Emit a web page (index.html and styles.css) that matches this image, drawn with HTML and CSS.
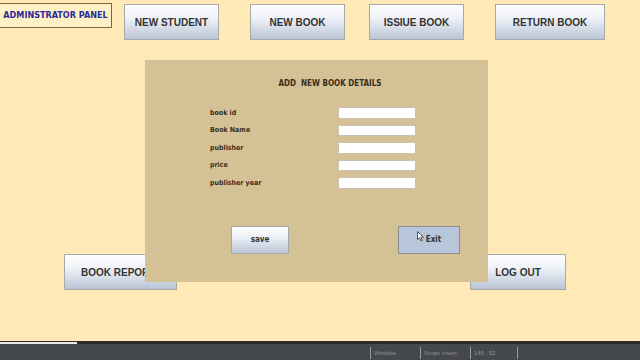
FILE: index.html
```html
<!DOCTYPE html>
<html lang="en">
<head>
    <meta charset="UTF-8">
    <meta name="viewport" content="width=device-width, initial-scale=1.0">
    <title>Administrator Panel</title>
    <link rel="stylesheet" href="styles.css">
</head>
<body>

<div class="screen">
    <!-- Top menu -->
    <div class="top-row">
        <div class="panel-title">ADMINSTRATOR PANEL</div>
        <button class="menu-btn btn-student">NEW STUDENT</button>
        <button class="menu-btn btn-book">NEW BOOK</button>
        <button class="menu-btn btn-issue">ISSIUE BOOK</button>
        <button class="menu-btn btn-return">RETURN BOOK</button>
    </div>

    <!-- Bottom menu -->
    <div class="bottom-row">
        <button class="menu-btn btn-report">BOOK REPORT</button>
        <button class="menu-btn btn-logout">LOG OUT</button>
    </div>

    <!-- Add book dialog -->
    <div class="dialog">
        <h3 class="dialog-title">ADD&nbsp; NEW BOOK DETAILS</h3>
        <form class="book-form" onsubmit="return false">
            <label for="bookId">book id</label>
            <input type="text" id="bookId">
            <label for="bookName">Book Name</label>
            <input type="text" id="bookName">
            <label for="publisher">publisher</label>
            <input type="text" id="publisher">
            <label for="price">price</label>
            <input type="text" id="price">
            <label for="pubYear">publisher year</label>
            <input type="text" id="pubYear">
        </form>
        <div class="dialog-actions">
            <button class="menu-btn btn-save">save</button>
            <button class="menu-btn btn-exit">
                <svg class="cursor" width="8" height="11" viewBox="0 0 8 11">
                    <path d="M0.5 0.5 L0.5 8.5 L2.5 6.8 L4 10 L5.3 9.4 L3.9 6.3 L6.5 6.2 Z" fill="#fff" stroke="#333" stroke-width="0.8"/>
                </svg>
                Exit
            </button>
        </div>
    </div>
</div>

<!-- Status bar -->
<div class="status-bar">
    <div class="status-left"></div>
    <div class="status-items">
        <span class="status-cell">Writable</span>
        <span class="status-cell">Smart Insert</span>
        <span class="status-cell">145 : 52</span>
        <span class="status-cell end"></span>
    </div>
</div>

</body>
</html>
```

FILE: styles.css
```css
body {
    margin: 0;
    padding: 0;
    width: 640px;
    height: 360px;
    overflow: hidden;
    background-color: #fee9b7;
    font-family: "Liberation Sans", Arial, sans-serif;
}

.screen {
    position: relative;
    height: 341px;
}

.top-row {
    display: flex;
    align-items: flex-start;
    padding-top: 3px;
}

.panel-title {
    width: 112px;
    height: 25px;
    border: 1px solid #7a6a3a;
    border-left: none;
    background-color: #fdf0c4;
    color: #2a2a9c;
    font-family: "DejaVu Sans Condensed", "DejaVu Sans", sans-serif;
    font-size: 9px;
    font-weight: bold;
    line-height: 23px;
    text-align: center;
    white-space: nowrap;
    box-sizing: border-box;
}

.menu-btn {
    height: 36px;
    border: 1px solid #a8a8a8;
    background: linear-gradient(to bottom, #fdfdfe 0%, #eef1f6 40%, #b9c5d7 100%);
    color: #333;
    font-family: "Liberation Sans", Arial, sans-serif;
    font-size: 10px;
    font-weight: bold;
    padding: 0;
    box-sizing: border-box;
}

.btn-student {
    width: 95px;
    margin: 1px 0 0 12px;
}

.btn-book {
    width: 95px;
    margin: 1px 0 0 31px;
}

.btn-issue {
    width: 95px;
    margin: 1px 0 0 24px;
}

.btn-return {
    width: 110px;
    margin: 1px 0 0 31px;
}

.bottom-row {
    display: flex;
    margin-top: 214px;
}

.btn-report {
    width: 113px;
    margin-left: 64px;
    text-align: left;
    padding-left: 16px;
}

.btn-logout {
    width: 96px;
    margin-left: 293px;
}

/* dialog sits over the menu */
.dialog {
    position: absolute;
    left: 145px;
    top: 60px;
    width: 343px;
    height: 222px;
    background-color: #d5c196;
    box-sizing: border-box;
    color: #3b2d1c;
    font-family: "DejaVu Sans Condensed", "DejaVu Sans", sans-serif;
}

.dialog-title {
    margin: 19px 0 0;
    text-align: center;
    font-size: 8px;
    font-weight: bold;
    color: #3b2d1c;
    padding-left: 27px;
}

.book-form {
    display: grid;
    grid-template-columns: 128px 78px;
    row-gap: 6px;
    margin: 19px 0 0 65px;
    align-items: center;
}

.book-form label {
    font-size: 7px;
    font-weight: bold;
    color: #3b2d1c;
}

.book-form input {
    width: 78px;
    height: 11.5px;
    margin: 0;
    padding: 0;
    border: 1px solid #c9c2b2;
    background-color: #fff;
    box-sizing: border-box;
}

.dialog-actions {
    display: flex;
    justify-content: space-between;
    margin: 37px 0 0 86px;
    width: 229px;
}

.btn-save {
    width: 58px;
    height: 28px;
    font-family: "DejaVu Sans Condensed", "DejaVu Sans", sans-serif;
    font-size: 8px;
}

.btn-exit {
    width: 62px;
    height: 28px;
    background: #b8c6dc;
    border-color: #8c8c8c;
    font-family: "DejaVu Sans Condensed", "DejaVu Sans", sans-serif;
    font-size: 8px;
    display: flex;
    align-items: center;
    justify-content: center;
    gap: 1px;
}

.cursor {
    margin-top: -6px;
}

.status-bar {
    height: 19px;
    border-top: 3px solid #2c2b28;
    background-color: #45484c;
    display: flex;
    box-sizing: border-box;
    position: relative;
}

.status-left {
    width: 77px;
    height: 2px;
    background-color: #e8e8e4;
    margin-top: -2px;
}

.status-items {
    display: flex;
    margin-left: 293px;
    padding-top: 3px;
}

.status-cell {
    width: 50px;
    height: 12px;
    border-left: 1px solid #9a9c9e;
    color: #8d9094;
    font-size: 6px;
    line-height: 12px;
    padding-left: 3px;
    box-sizing: border-box;
}

.status-cell.end {
    width: 1px;
    margin-left: -3px;
}
```
